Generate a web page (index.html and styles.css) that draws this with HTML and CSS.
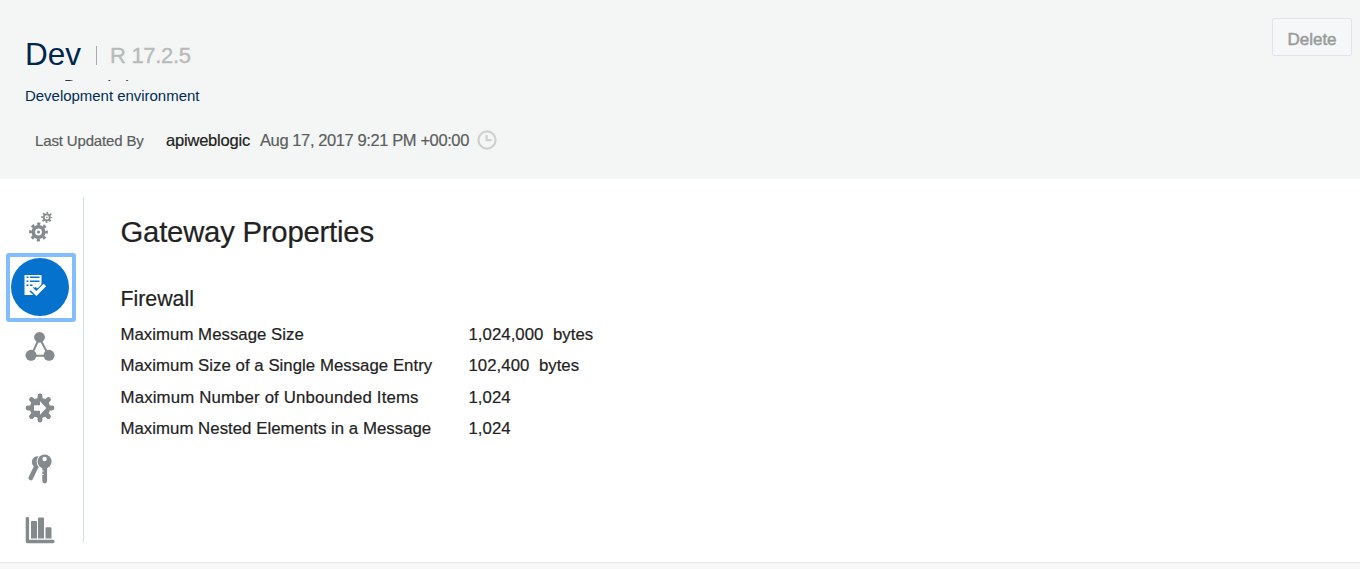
FILE: index.html
```html
<!DOCTYPE html>
<html lang="en">
<head>
<meta charset="utf-8">
<title>Gateway Properties</title>
<link rel="stylesheet" href="styles.css">
</head>
<body>
<header class="header">
  <div class="summary">
    <div class="title-row"><h1 class="name">Dev</h1><span class="divider"></span><span class="version">R 17.2.5</span></div>
    <div class="clipped"><span class="clipped-text">ate Description</span></div>
    <div class="description">Development environment</div>
    <div class="updated">
      <span class="updated-label">Last Updated By</span><span class="user">apiweblogic</span><span class="date">Aug 17, 2017 9:21 PM +00:00</span>
      <svg class="clock" viewBox="0 0 20 20" fill="none" stroke="#cfd1d0" stroke-width="2.2"><circle cx="10" cy="10" r="8.6"/><path d="M9.6 5v5.2h5"/></svg>
    </div>
  </div>
  <button class="delete">Delete</button>
</header>
<main class="main">
  <nav class="tabs">
    <a class="tab"><svg class="icon" viewBox="0 0 58 58">
      <g fill="none" stroke="#858a8d">
        <circle cx="28.5" cy="35" r="5.2" stroke-width="3.6"/><circle cx="28.5" cy="35" r="8" stroke-width="2.8" stroke-dasharray="3.1 3.183" stroke-dashoffset="1.55"/>
        <circle cx="36.8" cy="20.4" r="3" stroke-width="1.8"/><circle cx="36.8" cy="20.4" r="4.7" stroke-width="1.8" stroke-dasharray="1.7 1.991" stroke-dashoffset=".85"/>
      </g><circle cx="28.5" cy="35" r="1.6" fill="#858a8d"/><circle cx="36.8" cy="20.4" r=".8" fill="#858a8d"/></svg></a>
    <a class="tab active"><svg class="icon" viewBox="0 0 58 58">
      <path d="M13.5 17h17v11l-3 3-3-2-4 4 4 4h-11z" fill="#fff"/>
      <path d="M15.5 19.3h2M19 19.3h9.5M15.5 23.3h2M19 23.3h9.5M15.5 27.2h2M19 27.2h2.5" stroke="#0572ce" stroke-width="1.5"/>
      <path d="M20.5 31.2l5 4.7 8.3-8.5" fill="none" stroke="#0572ce" stroke-width="6"/>
      <path d="M20.4 30.7l5 4.8 8.5-8.5" fill="none" stroke="#fff" stroke-width="3.5"/></svg></a>
    <a class="tab"><svg class="icon" viewBox="0 0 58 58"><path d="M29.5 20L21 37.8h18z" fill="none" stroke="#858a8d" stroke-width="2"/><g fill="#858a8d"><circle cx="29.5" cy="19.3" r="5.4"/><circle cx="21" cy="37.3" r="5.5"/><circle cx="39" cy="37.3" r="5.5"/></g></svg></a>
    <a class="tab"><svg class="icon" viewBox="0 0 58 58"><circle cx="30" cy="29" r="10.2" fill="#858a8d"/><path d="M30 17v24M18 29h24M21.5 20.5l17 17M38.5 20.5l-17 17" stroke="#858a8d" stroke-width="4.8" stroke-linecap="round"/><path d="M24 26.3h6v-4l6.3 6.7-6.3 6.7v-4h-6z" fill="#fff"/></svg></a>
    <a class="tab"><svg class="icon" viewBox="0 0 58 58"><circle cx="27.5" cy="22" r="5.7" fill="#858a8d"/><path d="M27 25L20.8 38" stroke="#858a8d" stroke-width="4.6" stroke-linecap="round"/><path d="M26.5 17.3l-2.5 2" stroke="#858a8d" stroke-width="2"/><circle cx="34.6" cy="21.5" r="8" fill="#fff"/><circle cx="34.6" cy="21.5" r="7" fill="#858a8d"/><path d="M34.7 26v15" stroke="#858a8d" stroke-width="4.8" stroke-linecap="round"/><circle cx="34.6" cy="19" r="2.2" fill="#fff"/><path d="M31.6 31h2M31.6 34.5h2" stroke="#fff" stroke-width="1"/></svg></a>
    <a class="tab"><svg class="icon" viewBox="0 0 58 58"><path d="M17.4 17.5v23h25.5" fill="none" stroke="#858a8d" stroke-width="3.4" stroke-linecap="round" stroke-linejoin="round"/><path d="M21 21q0-1 1-1h4q1 0 1 1v16.5h-6zM28 17.5q0-1 1-1h4q1 0 1 1v20h-6zM35.5 27.3q0-1 1-1h4q1 0 1 1v10.2h-6z" fill="#858a8d"/></svg></a>
  </nav>
  <section class="content">
    <h2 class="heading">Gateway Properties</h2>
    <h3 class="subheading">Firewall</h3>
    <dl class="props">
      <dt>Maximum Message Size</dt><dd><span>1,024,000</span><span>bytes</span></dd>
      <dt>Maximum Size of a Single Message Entry</dt><dd><span>102,400</span><span>bytes</span></dd>
      <dt class="wide">Maximum Number of Unbounded Items</dt><dd>1,024</dd>
      <dt>Maximum Nested Elements in a Message</dt><dd>1,024</dd>
    </dl>
  </section>
</main>
<footer class="footer"></footer>
</body>
</html>
```

FILE: styles.css
```css
* { box-sizing: border-box; }
body { margin: 0; height: 569px; display: flex; flex-direction: column; overflow: hidden; background: #fff; color: #222; font-family: "Liberation Sans", Arial, sans-serif; white-space: nowrap; -webkit-text-stroke: .2px currentColor; }
h1, h2, h3, dl, dd { margin: 0; font-weight: normal; }
.header { height: 179px; flex: none; display: flex; justify-content: space-between; align-items: flex-start; padding: 18px 8px 0 25px; background: #f4f6f6; }
.summary { padding-top: 17px; }
.title-row { display: flex; height: 44px; line-height: 38px; }
.name { font-size: 31.5px; color: #00264d; -webkit-text-stroke: 0; }
.divider { width: 1px; height: 19px; margin: 11px 13px 0 15px; background: #aaa; }
.version { font-size: 22px; line-height: 42px; letter-spacing: -.3px; color: #b9bbba; -webkit-text-stroke: .4px #b9bbba; }
.clipped { height: 2px; overflow: hidden; padding-left: 11px; font-size: 16.5px; letter-spacing: .1px; color: #333; }
.clipped-text { display: block; line-height: 18px; margin-top: -2px; }
.description { height: 30px; line-height: 30px; font-size: 15px; letter-spacing: -.03px; color: #002b54; -webkit-text-stroke: 0; }
.updated { display: flex; align-items: center; height: 20px; margin-top: 19px; padding-left: 10px; color: #5b5e5d; }
.updated-label { width: 131px; font-size: 15px; letter-spacing: -.15px; padding-top: 1px; }
.user { width: 94px; font-size: 16.5px; letter-spacing: -.2px; color: #202020; }
.date { width: 217px; font-size: 16.5px; letter-spacing: -.4px; }
.clock { width: 20px; height: 20px; }
.delete { width: 80px; height: 38px; margin: 0; padding: 5px 0 0; border: 1px solid #dee6ea; border-radius: 2px; background: #f5f7f8; color: #999b9a; font: 17px "Liberation Sans", Arial, sans-serif; -webkit-text-stroke: .5px #999b9a; }
.main { flex: none; height: 383px; display: flex; padding-top: 18px; }
.tabs { width: 84px; height: 346px; padding: 0 0 0 6px; border-right: 1px solid #d3dde4; border-radius: 0 0 2px; }
.tab { display: flex; width: 70px; height: 61px; padding: 0 4px; }
.active { height: 69px; margin: -5px 0 -4px; padding: .5px; border: 4px solid #81bdff; border-radius: 3px; }
.active .icon { background: #0572ce; border-radius: 50%; }
.icon { display: block; flex: none; width: 58px; height: 58px; }
.content { padding: 15px 0 0 36.5px; }
.heading { font-size: 29.3px; line-height: 40px; letter-spacing: -.22px; }
.subheading { margin-top: 32px; font-size: 21.3px; line-height: 31px; }
.props { display: grid; grid-template-columns: 348px auto; grid-auto-rows: 31.5px; margin-top: 3.5px; font-size: 16.8px; line-height: 31.5px; letter-spacing: .03px; }
.props dd { display: flex; gap: 9.5px; }
.wide { letter-spacing: .16px; }
.footer { height: 7px; background: #f7f7f7; border-top: 1px solid #e5e5e5; }
```
